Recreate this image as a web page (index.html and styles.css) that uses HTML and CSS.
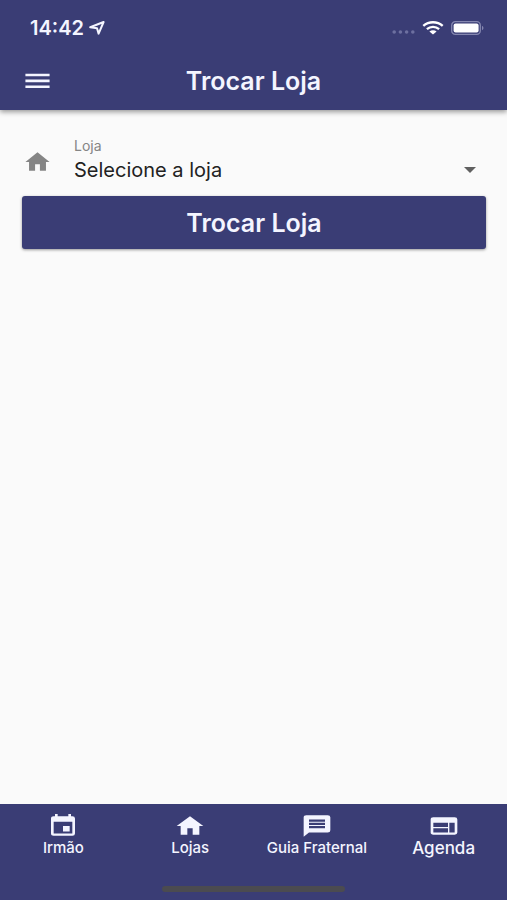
FILE: index.html
```html
<!DOCTYPE html>
<html lang="pt-BR">
<head>
<meta charset="utf-8">
<meta name="viewport" content="width=device-width, initial-scale=1">
<title>Trocar Loja</title>
<link rel="stylesheet" href="styles.css">
</head>
<body>
<header class="top">
  <div class="status">
    <span class="time">14:42</span>
    <svg class="location" viewBox="0 0 16 14" aria-hidden="true"><path d="M1.2 6.3 14.6 1 9.6 12.6 8 7.2Z"/></svg>
    <svg class="signal" viewBox="0 0 23 4" aria-hidden="true"><circle cx="2.2" cy="2" r="1.8"/><circle cx="8.4" cy="2" r="1.8"/><circle cx="14.6" cy="2" r="1.8"/><circle cx="20.8" cy="2" r="1.8"/></svg>
    <svg class="wifi" viewBox="0 0 22 14" aria-hidden="true"><path d="M1.3 4.9C6.8.1 15.2.1 20.7 4.9M4.9 8.1C8.4 5.1 13.6 5.1 17.1 8.1"/><path class="solid" d="M7.4 10.6C9.5 8.8 12.5 8.8 14.6 10.6L11 13.6Z"/></svg>
    <svg class="battery" viewBox="0 0 33 14" aria-hidden="true"><rect class="case" x=".7" y=".7" width="28.6" height="12.6" rx="3.6"/><rect class="charge" x="2.6" y="2.5" width="25" height="9" rx="2"/><path class="cap" d="M31 4.8c2 .8 2 3.6 0 4.4Z"/></svg>
  </div>
  <div class="bar">
    <button class="menu" type="button" aria-label="Menu">
      <svg class="icon" viewBox="0 0 24 24" preserveAspectRatio="none"><path d="M2 5.3h20v2.400H2zM2 10.700h20v2.400H2zM2 16.100h20v2.400H2z"/></svg>
    </button>
    <h1 class="title">Trocar Loja</h1>
  </div>
</header>

<main class="content">
  <form class="form">
    <div class="field">
      <svg class="icon field-icon" viewBox="0 0 24 24" preserveAspectRatio="none" aria-hidden="true"><path d="M10 20v-6h4v6h5v-8h3L12 3 2 12h3v8z"/></svg>
      <div class="field-body">
        <label class="label" for="loja">Loja</label>
        <div class="picker">
          <select class="select" id="loja"><option>Selecione a loja</option></select>
          <svg class="arrow" viewBox="0 0 12 6" aria-hidden="true"><path d="M0 0h12L6 6z"/></svg>
        </div>
      </div>
    </div>
    <button class="submit" type="button">Trocar Loja</button>
  </form>
</main>

<nav class="tabs">
  <div class="tab-row">
    <a class="tab" href="#irmao">
      <svg class="icon" viewBox="0 0 24 24" preserveAspectRatio="none" aria-hidden="true"><path fill-rule="evenodd" d="M6 1H8V3H16V1H18V3H19A2 2 0 0 1 21 5V19A2 2 0 0 1 19 21H5A2 2 0 0 1 3 19V5A2 2 0 0 1 5 3H6ZM5 8V19H19V8ZM12 12H17V17H12Z"/></svg>
      <span>Irmão</span>
    </a>
    <a class="tab" href="#lojas">
      <svg class="icon" viewBox="0 0 24 24" preserveAspectRatio="none" aria-hidden="true"><path d="M10 20v-6h4v6h5v-8h3L12 3 2 12h3v8z"/></svg>
      <span>Lojas</span>
    </a>
    <a class="tab" href="#guia">
      <svg class="icon" viewBox="0 0 24 24" preserveAspectRatio="none" aria-hidden="true"><path fill-rule="evenodd" d="M4 2H20A2 2 0 0 1 22 4V16A2 2 0 0 1 20 18H6L2 22V4A2 2 0 0 1 4 2ZM6 6H18V8H6ZM6 9H18V11H6ZM6 12H18V14H6Z"/></svg>
      <span>Guia Fraternal</span>
    </a>
    <a class="tab active" href="#agenda">
      <svg class="icon" viewBox="0 0 24 24" preserveAspectRatio="none" aria-hidden="true"><path fill-rule="evenodd" d="M4 4H20A2 2 0 0 1 22 6V18A2 2 0 0 1 20 20H4A2 2 0 0 1 2 18V6A2 2 0 0 1 4 4ZM4 9V13H15V9ZM4 14V18H15V14ZM16 9V18H20V9Z"/></svg>
      <span>Agenda</span>
    </a>
  </div>
  <div class="home-bar"></div>
</nav>
</body>
</html>
```
FILE: styles.css
```css
* {
  box-sizing: border-box;
}

body {
  margin: 0;
  min-height: 100vh;
  display: flex;
  flex-direction: column;
  background: #fafafa;
  color: #222;
  font-family: Inter, "Liberation Sans", sans-serif;
}

button,
select {
  margin: 0;
  padding: 0;
  border: 0;
  background: none;
  color: inherit;
  font: inherit;
}

.icon {
  display: block;
  width: 29px;
  height: 26px;
  fill: currentColor;
}

.top {
  background: #3a3d75;
  color: #f4f5ff;
  box-shadow: 0 2px 5px rgba(0, 0, 0, 0.4);
}

.status {
  display: flex;
  align-items: center;
  height: 52px;
  padding: 3px 23px 0 30px;
}

.time {
  font-size: 20px;
  font-weight: 600;
}

.location {
  width: 16px;
  height: 14px;
  margin-left: 5px;
  fill: none;
  stroke: currentColor;
  stroke-width: 2;
  stroke-linejoin: round;
}

.signal {
  width: 23px;
  height: 4px;
  margin: 8px 7px 0 auto;
  fill: #6d70a0;
}

.wifi {
  width: 22px;
  height: 14px;
  fill: none;
  stroke: #fff;
  stroke-width: 2.4;
}

.wifi .solid {
  fill: #fff;
  stroke: none;
}

.battery {
  width: 33px;
  height: 14px;
  margin-left: 7px;
}

.case {
  fill: none;
  stroke: #8587b0;
  stroke-width: 1.3;
}

.charge {
  fill: #fff;
}

.cap {
  fill: #8587b0;
}

.bar {
  display: grid;
  grid-template-columns: 29px 1fr 29px;
  align-items: center;
  height: 58px;
  padding: 0 23px;
}

.title {
  margin: 0;
  text-align: center;
  font-size: 25px;
  line-height: 28px;
  font-weight: 600;
}

.content {
  flex: 1;
  padding: 29px 21px 0 22px;
}

.field {
  display: flex;
  align-items: center;
  height: 46px;
  padding-left: 1px;
}

.field-icon {
  color: #858585;
}

.field-body {
  flex: 1;
  margin-left: 22px;
}

.label {
  display: block;
  color: #858585;
  font-size: 14px;
  line-height: 16px;
}

.picker {
  display: flex;
  align-items: center;
  position: relative;
}

.select {
  flex: 1;
  height: 32px;
  appearance: none;
  font-size: 20px;
}

.arrow {
  position: absolute;
  right: 10px;
  width: 12px;
  height: 6px;
  fill: #606060;
  pointer-events: none;
}

.submit {
  display: block;
  width: 100%;
  height: 53px;
  margin-top: 11px;
  border-radius: 3px;
  background: #3a3d75;
  color: #f4f5ff;
  font-size: 25px;
  font-weight: 600;
  box-shadow: 0 1px 3px rgba(0, 0, 0, 0.4);
}

.tabs {
  display: flex;
  flex-direction: column;
  align-items: center;
  gap: 29px;
  padding: 9px 0 8px;
  background: #3a3d75;
  color: #f4f5ff;
}

.tab-row {
  display: grid;
  grid-template-columns: repeat(4, 1fr);
  width: 100%;
}

.tab {
  display: flex;
  flex-direction: column;
  align-items: center;
  color: inherit;
  font-size: 15px;
  line-height: 18px;
  font-weight: 500;
  text-decoration: none;
  white-space: nowrap;
}

.tab .icon {
  width: 32px;
}

.active {
  font-size: 17px;
}

.home-bar {
  width: 36%;
  height: 6px;
  border-radius: 3px;
  background: #4b4b50;
}
```
